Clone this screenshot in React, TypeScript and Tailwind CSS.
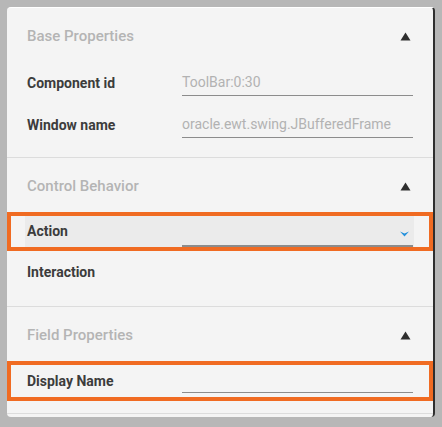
import React from 'react';

function Caret() {
  return (
    <svg width="11" height="9" viewBox="0 0 11 9" className="block">
      <path d="M5.5 0.5 L10.5 8.5 L0.5 8.5 Z" fill="#2e2e2e" />
    </svg>
  );
}

function Chevron() {
  return (
    <svg width="9" height="6" viewBox="0 0 9 6" className="block">
      <path d="M0 0.5 L4.5 2.6 L9 0.5 L4.5 5.5 Z" fill="#2491dc" />
    </svg>
  );
}

function Header({ title }: { title: string }) {
  return (
    <div className="h-[54px] pt-[2px] flex items-center justify-between pl-5 pr-[22px]">
      <span className="text-[15px] font-medium text-[#b4b4b4]">{title}</span>
      <Caret />
    </div>
  );
}

function Field({ value }: { value?: string }) {
  return (
    <div className="w-[231px] h-[25px] flex items-center border-b border-[#8c8c8c] text-[14px] text-[#b2b2b2]">
      {value}
    </div>
  );
}

function Row({ label, value, field = true }: { label: string; value?: string; field?: boolean }) {
  return (
    <div className="h-[42px] flex items-center pl-5">
      <span className="w-[155px] text-[14px] font-bold text-[#3c3c3c]">{label}</span>
      {field && <Field value={value} />}
    </div>
  );
}

export default function App() {
  return (
    <div
      className="w-[442px] h-[427px] bg-[#b7b7b7] pt-[7px] pl-[7px]"
      style={{ fontFamily: 'Roboto, "Liberation Sans", sans-serif' }}
    >
      <div className="w-[428px] h-[410px] bg-[#f4f4f4] border-t border-t-white border-r-2 border-r-[#2f2f2f] rounded-[4px] overflow-hidden flex flex-col">
        <section className="pb-[11px] border-b border-[#dcdcdc]">
          <Header title="Base Properties" />
          <Row label="Component id" value="ToolBar:0:30" />
          <Row label="Window name" value="oracle.ewt.swing.JBufferedFrame" />
        </section>

        <section className="pb-[13px] border-b border-[#dcdcdc]">
          <Header title="Control Behavior" />
          <div className="h-[39px] border-4 border-[#f06b22] pl-[14px] pr-[15px]">
            <div className="h-full bg-[#ebebeb] flex items-center pl-[2px]">
              <span className="w-[155px] text-[14px] font-bold text-[#3c3c3c]">Action</span>
              <div className="w-[231px] self-stretch flex items-end">
                <div className="w-full h-[24px] border-b-2 border-[#8c8c8c] flex items-center justify-end pr-[4px]">
                  <Chevron />
                </div>
              </div>
            </div>
          </div>
          <Row label="Interaction" field={false} />
        </section>

        <section className="pb-[12px] border-b border-[#dcdcdc]">
          <Header title="Field Properties" />
          <div className="h-[40px] border-4 border-[#f06b22] pl-4 pr-[15px] flex items-center">
            <span className="w-[155px] text-[14px] font-bold text-[#3c3c3c]">Display Name</span>
            <div className="w-[231px] self-stretch flex items-end pb-[4px]">
              <div className="w-full border-b border-[#8c8c8c]" />
            </div>
          </div>
        </section>
      </div>
    </div>
  );
}
